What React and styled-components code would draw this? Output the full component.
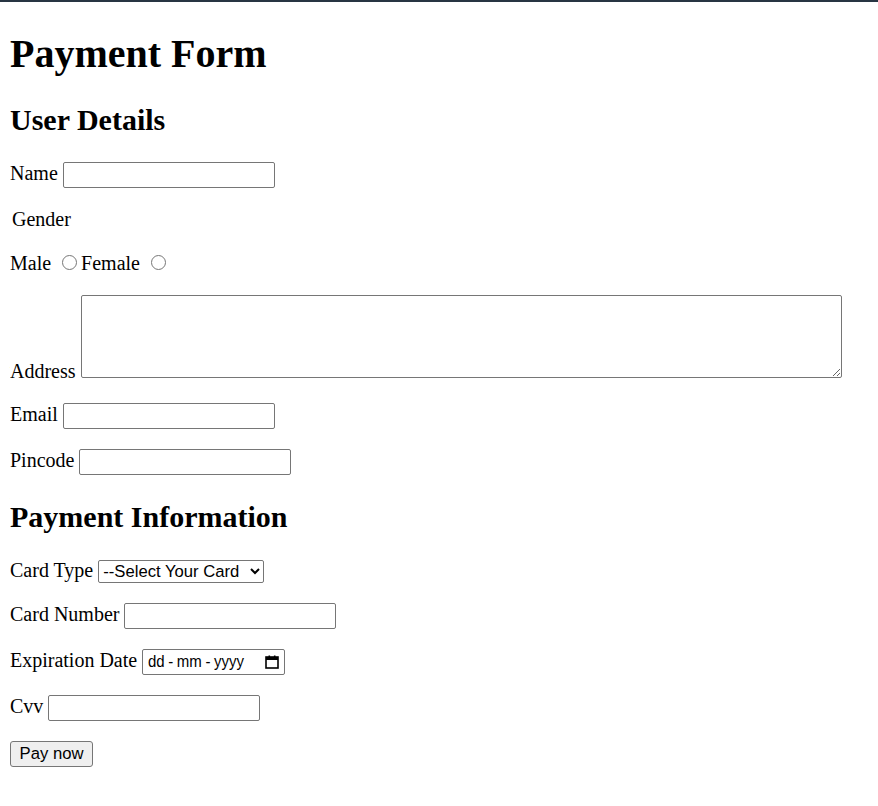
import React from "react";
import styled, { createGlobalStyle } from "styled-components";

const GlobalStyle = createGlobalStyle`
  html {
    border-top: 2px solid #283543;
    background: #ffffff;
  }
  body {
    margin: 10px;
    font-family: "Liberation Serif", "Times New Roman", serif;
    font-size: 20px;
    color: #000000;
  }
`;

const Title = styled.h1`
  font-size: 40px;
  font-weight: bold;
  margin: 17.5px 0 26.8px;
`;

const Section = styled.h2`
  font-size: 30px;
  font-weight: bold;
  margin: 24.9px 0;
`;

const Row = styled.p`
  margin: 20px 0;
  padding-left: ${(props) => (props.$indent ? "2px" : "0")};
`;

const TextInput = styled.input`
  box-sizing: border-box;
  width: 212px;
  height: 26px;
  padding: 1px 2px;
  border: 1px solid #767676;
  border-radius: 2px;
  font-family: "Liberation Sans", Arial, sans-serif;
  font-size: 16.67px;
  vertical-align: baseline;
`;

const Radio = styled.input`
  width: 15px;
  height: 15px;
  margin: 3.75px 3.75px 0 6.25px;
`;

const Address = styled.textarea`
  box-sizing: border-box;
  width: 761px;
  height: 83px;
  margin: 0;
  border: 1px solid #767676;
  border-radius: 2px;
  font-family: "Liberation Mono", monospace;
  font-size: 16.67px;
`;

const Select = styled.select`
  box-sizing: border-box;
  width: 166px;
  height: 23px;
  border: 1px solid #767676;
  border-radius: 2px;
  font-family: "Liberation Sans", Arial, sans-serif;
  font-size: 16.67px;
  background: #ffffff;
  color: #000000;
`;

const DateBox = styled.span`
  box-sizing: border-box;
  display: inline-flex;
  align-items: center;
  justify-content: space-between;
  width: 143px;
  height: 26px;
  padding: 0 5px 0 5px;
  border: 1px solid #767676;
  border-radius: 2px;
  font-family: "Liberation Sans", Arial, sans-serif;
  font-size: 16.67px;
  vertical-align: baseline;
`;

const DateText = styled.span`
  display: flex;
  gap: 4px;
  transform: scaleX(0.9);
  transform-origin: left center;
`;

const Button = styled.button`
  box-sizing: border-box;
  width: 83px;
  height: 26px;
  padding: 1px 7px;
  background: #efefef;
  border: 1px solid #767676;
  border-radius: 3px;
  font-family: "Liberation Sans", Arial, sans-serif;
  font-size: 16.67px;
  color: #000000;
`;

function CalendarIcon() {
  return (
    <svg width="14" height="14" viewBox="0 0 14 14">
      <rect x="1" y="2" width="12" height="11" fill="none" stroke="#000" strokeWidth="1.6" />
      <rect x="1" y="2" width="12" height="3" fill="#000" />
      <rect x="3.5" y="0.5" width="1.6" height="2.5" fill="#000" />
      <rect x="8.9" y="0.5" width="1.6" height="2.5" fill="#000" />
    </svg>
  );
}

export default function App() {
  return (
    <>
      <GlobalStyle />
      <form onSubmit={(e) => e.preventDefault()}>
        <Title>Payment Form</Title>
        <Section>User Details</Section>
        <Row>
          Name <TextInput type="text" />
        </Row>
        <Row $indent>Gender</Row>
        <Row>
          Male <Radio type="radio" name="gender" />Female <Radio type="radio" name="gender" />
        </Row>
        <Row>
          Address <Address />
        </Row>
        <Row>
          Email <TextInput type="email" />
        </Row>
        <Row>
          Pincode <TextInput type="text" />
        </Row>
        <Section>Payment Information</Section>
        <Row>
          Card Type{" "}
          <Select defaultValue="">
            <option value="">--Select Your Card</option>
            <option value="visa">Visa</option>
            <option value="master">Master Card</option>
          </Select>
        </Row>
        <Row>
          Card Number <TextInput type="text" />
        </Row>
        <Row>
          Expiration Date{" "}
          <DateBox>
            <DateText>
              <span>dd</span>
              <span>-</span>
              <span>mm</span>
              <span>-</span>
              <span>yyyy</span>
            </DateText>
            <CalendarIcon />
          </DateBox>
        </Row>
        <Row>
          Cvv <TextInput type="text" />
        </Row>
        <Row>
          <Button type="submit">Pay now</Button>
        </Row>
      </form>
    </>
  );
}
